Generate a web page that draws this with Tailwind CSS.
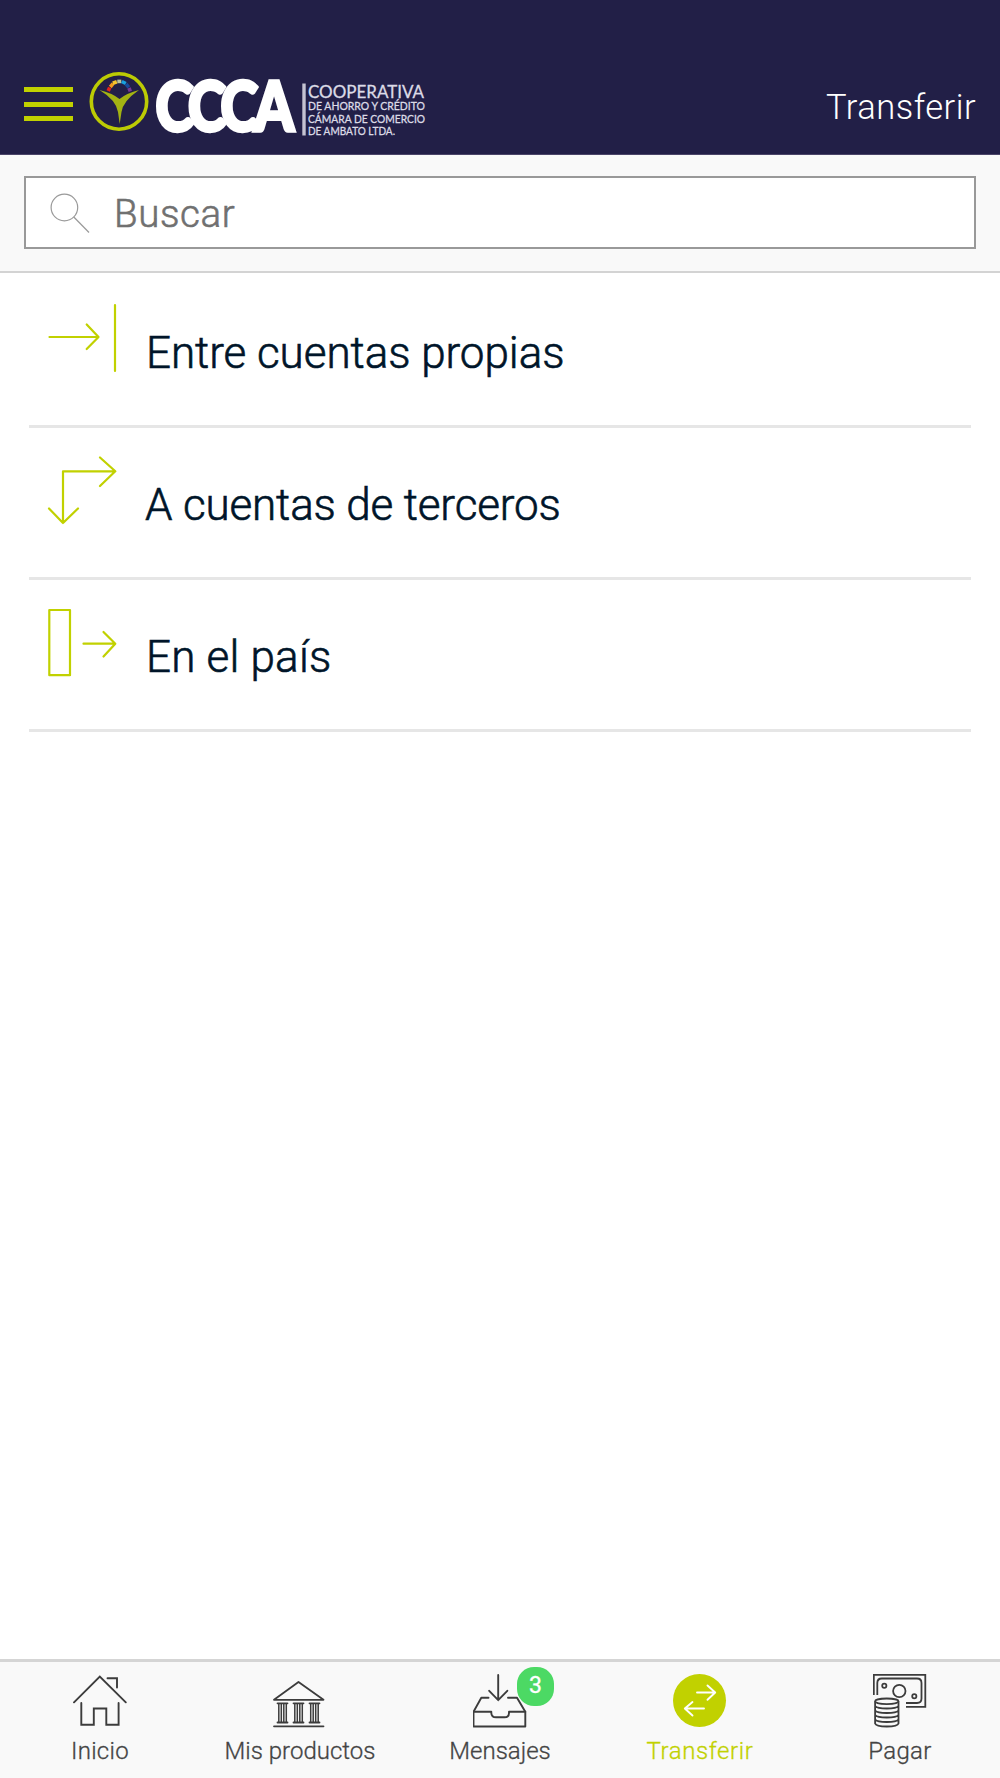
<!DOCTYPE html>
<html lang="es">

<head>
    <meta charset="UTF-8">
    <meta name="viewport" content="width=device-width, initial-scale=1.0">
    <title>Transferir</title>
    <script src="https://cdn.jsdelivr.net/npm/@tailwindcss/browser@4"></script>
</head>

<body class="flex flex-col h-screen bg-white font-['Roboto',sans-serif] overflow-hidden">
    <header class="flex items-start justify-between h-[155px] shrink-0 px-6 pt-[70px] bg-[#221f47] border-b border-[#4b4569]">
        <div class="flex">
            <button class="flex flex-col gap-[9.5px] w-[49px] pt-[17px]" aria-label="Menú">
                <span class="w-full h-[5px] bg-[#c1d100]"></span>
                <span class="w-full h-[5px] bg-[#c1d100]"></span>
                <span class="w-full h-[5px] bg-[#c1d100]"></span>
            </button>
            <!-- Logo -->
            <svg class="ml-[15px] overflow-visible" width="342" height="70" viewBox="88 70 342 70">
                <circle cx="119" cy="101.500" r="27.700" fill="none" stroke="#bccb04" stroke-width="3.600" />
                <path d="M99.500 90Q112 93 119.500 99Q127 93 139 90Q123 101 121.500 112L119.700 124L118 112Q116 100 99.500 90Z" fill="#a3b312" />
                <g fill="none" stroke-width="3.600">
                    <path d="M108.200 91l1.500-3.500" stroke="#e2231a" />
                    <path d="M110.300 87l2.700-3.300" stroke="#f39a1d" />
                    <path d="M112.800 83.200l4-1.500" stroke="#f5c52c" />
                    <path d="M117.300 81.400h4" stroke="#b9c39a" />
                    <path d="M121.800 81.500l4 2" stroke="#18a0df" />
                    <path d="M126 84l2.800 3.300" stroke="#18499a" />
                    <path d="M129 88l1.300 3.300" stroke="#7b3a94" />
                </g>
                <text transform="translate(155.500 131) scale(.84 1)" fill="#fff" stroke="#fff" stroke-width="3.500" font-family="Lato" font-weight="900" font-size="68" letter-spacing="-5">CCCA</text>
                <path d="M304 83.500v52" stroke="#c4c3d2" stroke-width="3.400" />
                <g fill="#dcdbe6" stroke="#dcdbe6" stroke-width=".3" font-family="Lato">
                    <text x="308" y="97.500" font-size="18" textLength="116" lengthAdjust="spacingAndGlyphs">COOPERATIVA</text>
                    <text x="308" y="110.300" font-size="11.500" textLength="117" lengthAdjust="spacingAndGlyphs">DE AHORRO Y CRÉDITO</text>
                    <text x="308" y="122.500" font-size="11.500" textLength="117" lengthAdjust="spacingAndGlyphs">CÁMARA DE COMERCIO</text>
                    <text x="308" y="134.700" font-size="11.500" textLength="87" lengthAdjust="spacingAndGlyphs">DE AMBATO LTDA.</text>
                </g>
            </svg>
        </div>
        <h1 class="pt-4 text-[34.500px] leading-[42px] font-light tracking-[0.5px] text-white">Transferir</h1>
    </header>

    <div class="h-[118px] shrink-0 px-6 pt-[21px] bg-[#f9f9f9] border-b-2 border-[#d3d3d3]">
        <label class="flex items-center h-[73px] pl-[23px] bg-white border-[2.500px] border-[#999]">
            <svg width="42" height="42" viewBox="49 191 42 42" fill="none" stroke="#999" stroke-width="1.200">
                <circle cx="64.400" cy="206.500" r="13.300" />
                <path d="M73.800 216L89 231.500" />
            </svg>
            <span class="ml-[23px] pt-1 text-[38.500px] leading-none font-light tracking-[0.6px] text-[#707070] [-webkit-text-stroke:0.6px]">Buscar</span>
        </label>
    </div>

    <main class="flex-1 px-[29px] pt-[3px] text-[44px] font-light text-[#001529] [-webkit-text-stroke:0.6px]">
        <a class="flex h-[152px] pl-[18px] border-b-[3px] border-[#e6e6e6]">
            <svg class="mt-[27px]" width="70" height="70" viewBox="47 303 70 70" fill="none" stroke="#c1d100" stroke-width="2.200" stroke-linecap="round" stroke-linejoin="round">
                <path d="M49.500 337H98M86.700 324.500L98.500 337L86.700 349M115 305v66" />
            </svg>
            <span class="ml-[29px] mt-[49px] leading-[56px] tracking-[-0.05px]">Entre cuentas propias</span>
        </a>
        <a class="flex h-[152px] pl-[18px] border-b-[3px] border-[#e6e6e6]">
            <svg class="mt-[27px]" width="70" height="70" viewBox="47 455 70 70" fill="none" stroke="#c1d100" stroke-width="2.200" stroke-linecap="round" stroke-linejoin="round">
                <path d="M115 471.300H63V523M100 457.500L115.300 471.300L100 486M49 508.500L63 523L78 508.500" />
            </svg>
            <span class="ml-7 mt-[49px] leading-[56px] tracking-[-0.15px]">A cuentas de terceros</span>
        </a>
        <a class="flex h-[152px] pl-[18px] border-b-[3px] border-[#e6e6e6]">
            <svg class="mt-[27px]" width="70" height="70" viewBox="47 607 70 70" fill="none" stroke="#c1d100" stroke-width="2.200" stroke-linecap="round" stroke-linejoin="round">
                <path d="M49.300 610H70V675.200H49.300ZM83.500 643.700H115M103.500 632L115.300 643.700L103.500 656.500" />
            </svg>
            <span class="ml-[29px] mt-[49px] leading-[56px] tracking-[0.2px]">En el país</span>
        </a>
    </main>

    <nav class="grid grid-cols-5 h-[119px] shrink-0 bg-[#f9f9f9] border-t-[3px] border-[#d5d5d5] text-2xl font-light text-[#444] text-center [-webkit-text-stroke:0.3px]">
        <a class="flex flex-col items-center pt-3">
            <svg width="54" height="54" viewBox="73 1674 54 54" fill="none" stroke="#3c3c3c" stroke-width="1.900" stroke-linecap="round">
                <path d="M74 1702.300L99.800 1676.500L125.800 1702.300M107.500 1678.300H117V1687.500M81.300 1703V1724.800H93.800V1708.500H106.300V1724.800H118.600V1703" />
            </svg>
            <span class="mt-2 leading-[30px] tracking-[0.3px]">Inicio</span>
        </a>
        <a class="flex flex-col items-center pt-3">
            <svg width="54" height="54" viewBox="273 1674 54 54" fill="none" stroke="#3c3c3c" stroke-width="1.800" stroke-linecap="round" stroke-linejoin="round">
                <path d="M274 1699.800L298.500 1682L323.500 1699.800ZM274 1726.300H323.500" />
                <path d="M277.500 1703.300H287.500M277.500 1722.500H287.500M293.500 1703.300H303.500M293.500 1722.500H303.500M309.500 1703.300H319.500M309.500 1722.500H319.500" />
                <path stroke-width="1.500" d="M278.800 1704V1722M281.300 1704V1722M283.800 1704V1722M286.300 1704V1722M294.800 1704V1722M297.300 1704V1722M299.800 1704V1722M302.300 1704V1722M310.700 1704V1722M313.200 1704V1722M315.700 1704V1722M318.200 1704V1722" />
            </svg>
            <span class="mt-2 leading-[30px]">Mis productos</span>
        </a>
        <a class="relative flex flex-col items-center pt-3">
            <svg width="54" height="54" viewBox="473 1674 54 54" fill="none" stroke="#3c3c3c" stroke-width="1.900" stroke-linecap="round" stroke-linejoin="round">
                <path d="M498.200 1675V1700M489.200 1690.800L498.200 1700.200L507.300 1690.800M488.500 1697.800H481.300L473.500 1711.800V1726.500H525.300V1711.800L517 1697.800H508" />
                <path d="M473.500 1711.800H491.300V1713Q491.500 1717.300 496 1717.300H504.500Q509 1717.300 509 1713V1711.800H525.300" />
            </svg>
            <span class="absolute left-[117px] top-[5px] w-[37px] h-[39px] rounded-[17px] bg-[#4cd964] text-white text-[23px] leading-[38px] font-normal">3</span>
            <span class="mt-2 leading-[30px]">Mensajes</span>
        </a>
        <a class="flex flex-col items-center pt-3 text-[#c1d100]">
            <svg width="54" height="54" viewBox="673 1674 54 54" fill="none" stroke="#fff" stroke-width="1.900" stroke-linecap="round" stroke-linejoin="round">
                <circle cx="699.500" cy="1700.500" r="26.500" fill="#c1d100" stroke="none" />
                <path d="M697 1692.500H715M707.500 1685.500L715.200 1692.500L707.500 1699.800M704 1708.500H685M692.500 1702L684.800 1708.500L692.500 1715.500" />
            </svg>
            <span class="mt-2 leading-[30px] tracking-[0.6px]">Transferir</span>
        </a>
        <a class="flex flex-col items-center pt-3">
            <svg width="54" height="54" viewBox="873 1674 54 54" fill="none" stroke="#3c3c3c" stroke-width="1.800">
                <path d="M873.800 1695V1674.800H925.300V1706.800H906M877.300 1695V1683Q877.300 1678.500 881.800 1678.500H917Q921.500 1678.500 921.500 1683V1698.500Q921.500 1703 917 1703H906" />
                <circle cx="899.300" cy="1691" r="6.200" />
                <circle cx="884.300" cy="1685.700" r="2.100" />
                <circle cx="914.300" cy="1696.200" r="2.100" />
                <ellipse cx="886.800" cy="1701.300" rx="11.700" ry="2.800" />
                <path d="M875.100 1701.300V1723.500Q876 1726.500 886.800 1726.500T898.500 1723.500V1701.300M875.100 1706Q877 1708.500 886.800 1708.500T898.500 1706M875.100 1710.500Q877 1713 886.800 1713T898.500 1710.500M875.100 1715Q877 1717.500 886.800 1717.500T898.500 1715M875.100 1719.500Q877 1722 886.800 1722T898.500 1719.500" />
            </svg>
            <span class="mt-2 leading-[30px] tracking-[0.3px]">Pagar</span>
        </a>
    </nav>
</body>

</html>
